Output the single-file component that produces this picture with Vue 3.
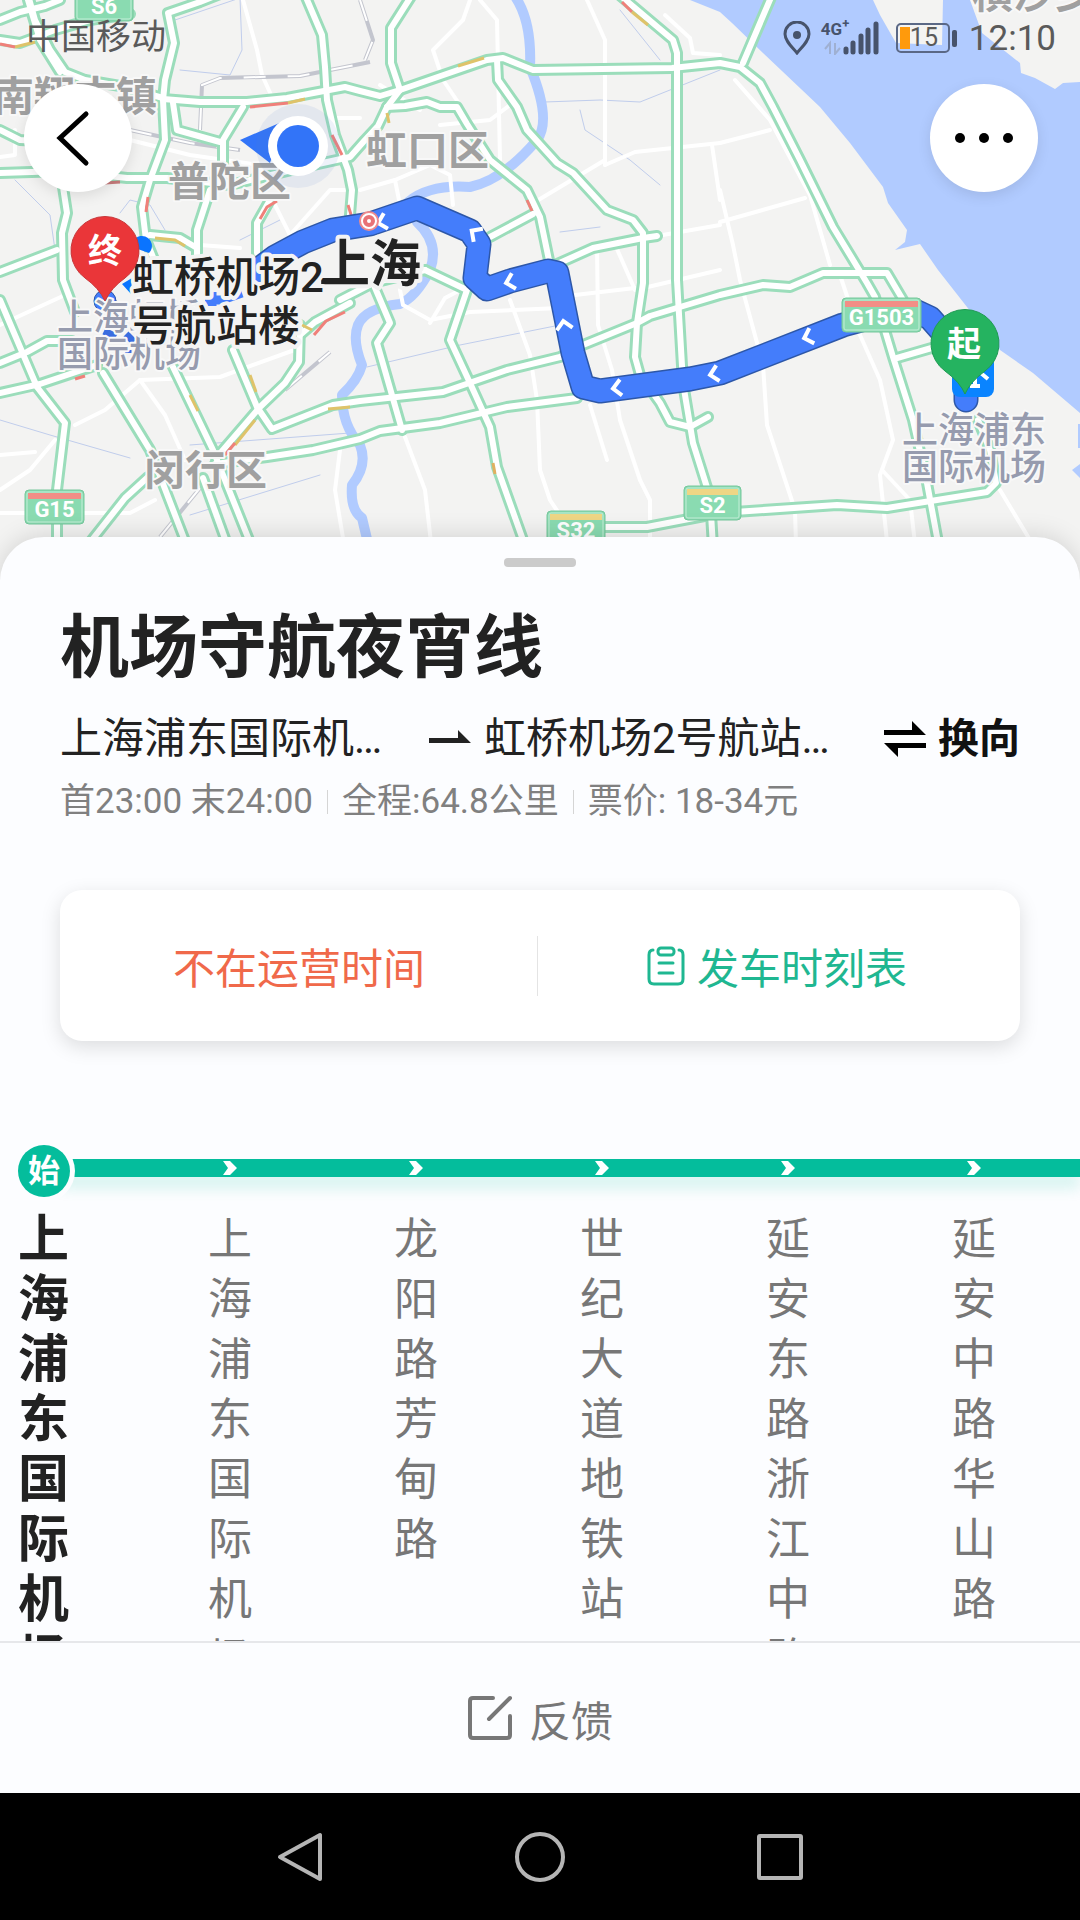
<script setup>
const highways = [
  '28,-5 35,20 50,50 65,72 85,80 120,86 163,98',
  '0,20 20,12 45,6 60,0',
  '0,40 20,43 55,30 90,20 130,14',
  '60,72 40,40 28,0',
  '225,-8 200,2 168,13 174,43 165,80 163,100 165,140 150,180 142,207 146,240 155,262',
  '163,99 200,102 247,102 287,98 345,87 360,91 380,96 400,90 487,60 503,58 533,70 672,68 720,63 740,67 760,83 773,107 800,160 833,227 867,283 875,297 893,357 913,420 927,483 937,537 942,580',
  '305,-5 322,35 325,67 327,100 335,135 348,170 352,190 350,215',
  '0,173 63,171 127,178 167,178 230,185 300,168 350,157 365,140 378,126 387,107 400,90',
  '412,-5 391,28 391,63 400,90',
  '387,107 405,106 427,102 440,107 457,107 467,124 490,160 527,190 540,217 550,265',
  '497,60 498,80 517,107 527,130 557,163 573,173 607,210 633,220 643,233 643,283 637,323 635,357 640,375 660,403 670,422 690,427 708,417',
  '616,-8 673,40 677,53 677,280 683,383 693,443 710,497 715,580',
  '490,237 533,214', '555,265 593,248 643,238 657,236',
  '233,350 257,407 272,429 333,405 360,401 443,392 507,370 560,357 583,345 637,323 650,316 720,295 763,285 790,287 823,273 887,273 903,300',
  '215,464 267,457 313,450 360,439 380,431 440,423 507,407 577,398',
  '580,527 647,527 720,513 837,505 887,508 987,492 996,483 990,450 978,420',
  '425,270 467,290 450,340 470,383 490,427 497,467 523,540 540,580',
  '340,300 373,283 425,270', '373,283 390,323 377,343 402,430',
  '0,300 37,387 65,423 57,490 57,580',
  '0,363 27,352 47,341 72,341', '0,393 40,384 97,365',
  '103,373 150,450 200,580', '173,367 213,450 265,580', '203,478 240,580',
  '300,325 299,362 285,383 260,407 217,457', '148,477 125,498 88,545',
  '63,187 67,213 62,233 63,280 75,312', '0,272 57,250',
  '210,190 197,230 197,257', '243,107 223,140 223,163', '173,103 177,130 220,142',
  '270,200 257,223 257,253', '150,235 180,238 197,248',
  '772,-5 743,63', '897,358 935,347', '0,130 20,140 60,142', '300,335 315,322 350,303',
]
const streets = [
  '243,0 257,50 262,75 272,97', '470,0 463,20 433,50 443,80 460,105', '500,160 497,20 480,0',
  '587,0 605,40 605,165', '665,15 690,38 693,53 720,55', '605,165 635,152 720,143', '605,160 530,205', '712,145 720,200',
  '360,190 395,180 430,165 450,175 453,205', '440,125 490,120 510,105', '395,180 400,205',
  '597,245 598,325 612,370 620,420 640,480 650,500 650,560', '613,240 635,290 720,270',
  '400,290 403,305 430,320 470,312 560,308', '510,300 530,355 537,400 540,470 550,500 560,515',
  '590,405 607,460', '405,437 425,490 433,560', '575,295 635,288', '657,236 720,225',
  '735,80 770,120 810,195 830,265', '720,143 770,130', '720,222 805,198', '720,190 733,245 740,280 763,365 767,425 795,510 797,580',
  '840,275 860,335 880,380 893,440 880,475 890,570', '882,470 910,500 918,570', '1000,490 1030,540 1045,580',
  '0,325 65,295', '75,425 105,410 140,380 220,377 300,348', '140,380 165,415 185,460', '55,440 30,470 0,490', '0,455 35,452',
  '0,513 130,513 155,500', '270,195 290,235 330,190 350,190', '200,245 240,248', '380,85 420,110', '330,118 360,118',
  '340,450 335,490 345,550', '130,140 190,155 260,165', '430,323 445,298 470,285', '0,157 15,155 15,130',
]
const streams = [
  '175,20 240,-2 242,50 230,75 180,70', '545,102 600,100 640,102 720,70', '580,110 585,130 630,160 660,185',
  '560,232 600,227', '367,367 460,345 560,325', '0,420 50,435 130,458', '190,445 350,433', '120,213 130,200 150,205 165,230',
  '15,180 50,215 55,250', '190,515 320,475', '240,240 280,220', '620,10 660,60',
]
const rails = ['200,130 202,85 220,78 300,76 370,62', '130,130 190,143 240,150', '360,0 373,40 365,60', '285,390 330,352', '160,537 200,488']
const slow = [
  { c: '#f0807a', p: '250,107 288,103' }, { c: '#dfc36a', p: '288,103 305,99' }, { c: '#dfc36a', p: '458,66 484,58' },
  { c: '#f0807a', p: '332,135 342,155' }, { c: '#f0807a', p: '260,219 267,207 277,201' }, { c: '#f0807a', p: '148,197 146,212' },
  { c: '#f0807a', p: '348,205 353,221' }, { c: '#dfc36a', p: '155,238 175,240 185,246' }, { c: '#f0807a', p: '527,200 532,211' },
  { c: '#f0807a', p: '622,2 632,12' }, { c: '#dfc36a', p: '632,12 648,25' }, { c: '#f0807a', p: '314,335 326,321 345,312' },
  { c: '#dfc36a', p: '302,325 312,330' }, { c: '#dfc36a', p: '190,395 198,411' }, { c: '#dfc36a', p: '250,375 256,392' },
  { c: '#dfc36a', p: '255,420 235,445' }, { c: '#f0807a', p: '235,443 225,455' }, { c: '#dfc36a', p: '387,113 389,123' },
  { c: '#dfc36a', p: '328,409 350,407' }, { c: '#dfc36a', p: '15,47 35,42' }, { c: '#f0807a', p: '0,44 15,47' },
  { c: '#c67b7b', p: '105,183 120,182' }, { c: '#e0b060', p: '493,463 495,474' }, { c: '#f0807a', p: '75,379 85,376' },
]
const route = '966,400 966,375 945,335 930,318 915,311 880,315 843,325 720,373 690,379 600,391 583,387 573,353 557,273 548,271 510,281 487,289 475,278 479,244 470,231 417,208 370,224 333,230 303,242 275,257 255,272'
const arrows = [
  { x: 382, y: 222, r: -15 }, { x: 475, y: 233, r: 35 }, { x: 510, y: 282, r: -15 }, { x: 564, y: 325, r: 80 },
  { x: 617, y: 388, r: -8 }, { x: 714, y: 374, r: -12 }, { x: 808, y: 337, r: -18 },
]
const shields = [
  { t: 'S6', x: 75, y: -13, w: 58, c: '#8adbb1' }, { t: 'G15', x: 25, y: 490, w: 59, c: '#f28e86' },
  { t: 'G1503', x: 842, y: 298, w: 79, c: '#f28e86' }, { t: 'S32', x: 547, y: 511, w: 58, c: '#eed685' },
  { t: 'S2', x: 684, y: 486, w: 57, c: '#eed685' },
]
const districts = [
  { t: '南翔古镇', x: -7, y: 111 }, { t: '普陀区', x: 168, y: 196 }, { t: '虹口区', x: 366, y: 165 },
  { t: '闵行区', x: 144, y: 485 }, { t: '横沙乡', x: 972, y: 8 },
]
const airports = [
  { t: '上海虹桥', x: 57, y: 330 }, { t: '国际机场', x: 57, y: 367 },
  { t: '上海浦东', x: 902, y: 443 }, { t: '国际机场', x: 902, y: 480 },
]
const stops = ['上海浦东国际机场', '上海浦东国际机场', '龙阳路芳甸路', '世纪大道地铁站', '延安东路浙江中路', '延安中路华山路']
</script>

<template>
  <div class="page">
    <div class="map">
      <svg class="map-art" viewBox="0 0 1080 580" preserveAspectRatio="xMidYMin slice">
        <rect width="1080" height="580" fill="#f3f3f2" />
        <path fill="#b1cbff" d="M690 0 720 12 732 23 763 53 820 107 850 143 883 187 888 203 907 230 905 242 895 250 920 244 938 270 967 307 1000 350 1033 373 1080 413V0Z" />
        <path fill="#f3f3f2" d="M873 0 880 15 896 43 942 45 943 0ZM970 0 982 33 1020 63 1021 73 1035 78 1055 89 1063 83 1080 82V0Z" />
        <path fill="#b1cbff" d="M1078 424h2v24h-2zM1072 470l8-6v14z" />
        <g fill="none" stroke-linejoin="round" stroke-linecap="round">
          <polyline v-for="p in streams" :key="p" :points="p" stroke="#c0cdec" stroke-width="1" />
          <path d="M514 -5 Q532 20 530 67 Q552 120 537 140 Q503 180 470 187 Q430 184 408 202 M417 222 Q440 243 430 270 Q416 297 400 304 Q365 308 358 325 Q352 340 362 365 Q358 380 342 395 Q342 425 360 445 Q368 465 352 485 Q350 510 362 518 L372 560" stroke="#b1cbff" stroke-width="10" />
          <polyline v-for="p in streets" :key="p" :points="p" stroke="#fff" stroke-width="4" />
          <polyline v-for="p in rails" :key="p" :points="p" stroke="#c3c5ce" stroke-width="4" stroke-linecap="butt" />
          <polyline v-for="p in rails" :key="p + 'd'" :points="p" stroke="#fff" stroke-width="2" stroke-dasharray="22 22" stroke-linecap="butt" />
          <polyline v-for="p in highways" :key="p" :points="p" stroke="#9bddbb" stroke-width="12" />
          <polyline v-for="p in highways" :key="p + 'i'" :points="p" stroke="#fff" stroke-width="6" />
          <polyline v-for="s in slow" :key="s.p" :points="s.p" :stroke="s.c" stroke-width="3" stroke-linecap="butt" />
        </g>
        <g font-weight="700" font-size="41" fill="#a0a0a0" class="halo">
          <text v-for="d in districts" :key="d.t" :x="d.x" :y="d.y">{{ d.t }}</text>
        </g>
        <g fill="none" stroke-linejoin="round" stroke-linecap="round">
          <polyline :points="route" stroke="#2d57a8" stroke-width="25" />
          <polyline :points="route" stroke="#447dfb" stroke-width="22" />
          <path d="M212 306V292M205 300H222L242 293" stroke="#447dfb" stroke-width="9" stroke-linecap="butt" />
          <path d="M104 331l12 6M126 334l8 8M128 350v3" stroke="#3a6de0" stroke-width="7" stroke-linecap="butt" />
          <path v-for="a in arrows" :key="a.x" :transform="`translate(${a.x} ${a.y}) rotate(${a.r})`" d="M4 -8-4 0 4 8" stroke="#fff" stroke-width="4" stroke-linecap="butt" stroke-linejoin="miter" />
          <circle cx="105" cy="301" r="11" fill="#447dfb" stroke="#2d57a8" stroke-width="1" />
        </g>
        <g font-weight="500" font-size="36" fill="#969bae" class="halo">
          <text v-for="a in airports" :key="a.y" :x="a.x" :y="a.y">{{ a.t }}</text>
        </g>
        <g>
          <circle cx="369" cy="221" r="9" fill="#fff" stroke="#ee8a8c" stroke-width="2" />
          <circle cx="369" cy="221" r="4" fill="#fff" stroke="#e87276" stroke-width="4" />
        </g>
        <g v-for="s in shields" :key="s.t" class="shield">
          <rect :x="s.x" :y="s.y" :width="s.w" height="34" rx="4" fill="#8adbb1" stroke="#76c79c" stroke-width="1" />
          <rect :x="s.x + 2" :y="s.y + 2" :width="s.w - 4" height="30" rx="2" fill="none" stroke="#c4eed8" stroke-width="1" />
          <rect :x="s.x + 3" :y="s.y + 3" :width="s.w - 6" height="6" :fill="s.c" />
          <text :x="s.x + s.w / 2" :y="s.y + 27" text-anchor="middle">{{ s.t }}</text>
        </g>
        <path d="M240 140 284 121 270 163Z" fill="#3274f8" />
        <circle cx="298" cy="146" r="42" fill="#5b7ed0" opacity="0.1" />
        <circle cx="298" cy="146" r="30" fill="#fff" />
        <circle cx="298" cy="146" r="21" fill="#3274f8" />
        <path d="M132 247a10 10 0 1 1 17 6ZM122 284l10-6-1 16Z" fill="#0a74ff" />
        <g font-weight="700" fill="#222" class="halo place">
          <text x="319" y="282" font-size="51">上海</text>
          <g font-size="42" font-weight="500"><text x="132" y="292">虹桥机场2</text><text x="132" y="341">号航站楼</text></g>
        </g>
        <path d="M105 301Q99 288 85 278A34 34 0 1 1 125 278Q111 288 105 301Z" fill="#ea3639" stroke="#c8383a" stroke-width="1" />
        <rect x="952" y="355" width="42" height="42" rx="8" fill="#0a84ff" />
        <path d="M970 386h10M975 386V374M964 379l12-10 12 10" stroke="#fff" stroke-width="4" fill="none" />
        <path d="M965 394Q960 382 945 371A34 34 0 1 1 985 371Q970 382 965 394Z" fill="#25b360" stroke="#1f9a53" stroke-width="1" />
        <g font-weight="700" font-size="34" fill="#fff" text-anchor="middle">
          <text x="105" y="263">终</text><text x="964" y="356">起</text>
        </g>
      </svg>

      <header class="status">
        <span class="carrier">中国移动</span>
        <span class="tray">
          <svg width="28" height="34" viewBox="0 0 28 34"><path d="M14 32C9 26 2 20 2 13A12 12 0 0 1 26 13C26 20 19 26 14 32Z" fill="none" stroke="#47536b" stroke-width="3" /><circle cx="14" cy="14" r="4" fill="#47536b" /></svg>
          <span class="signal">
            <span class="net">4G<sup>+</sup></span>
            <svg width="60" height="34" viewBox="0 0 60 34"><path d="M27 31v-3M34 31V22M42 31V15M49 31V9M57 31V3" stroke="#47536b" stroke-width="5" stroke-linecap="round" /><path d="M11 33V22L6 28M16 22v11l5-6" fill="none" stroke="#9fb0d2" stroke-width="2" /></svg>
          </span>
          <span class="battery"><i></i>15</span>
          <span class="clock">12:10</span>
        </span>
      </header>

      <div class="tools">
        <button class="round" aria-label="返回"><svg width="108" height="108" viewBox="0 0 108 108"><path d="M62 30 36 54 62 79" fill="none" stroke="#000" stroke-width="5" stroke-linecap="round" /></svg></button>
        <button class="round" aria-label="更多"><svg width="108" height="108" viewBox="0 0 108 108"><circle cx="30" cy="54" r="5" /><circle cx="54" cy="54" r="5" /><circle cx="78" cy="54" r="5" /></svg></button>
      </div>
    </div>

    <main class="sheet">
      <div class="grip"></div>
      <section class="info">
        <h1>机场守航夜宵线</h1>
        <div class="direction">
          <span class="from">上海浦东国际机…</span>
          <svg class="to-arrow" width="42" height="18" viewBox="0 0 42 18"><path d="M0 8H29V0L42 13H0Z" fill="#222" /></svg>
          <span class="to">虹桥机场2号航站…</span>
          <button class="swap">
            <svg width="42" height="38" viewBox="0 0 42 38"><path d="M0 10H28V1L42 15H0ZM42 23H0L14 37V28H42Z" fill="#000" /></svg>
            换向
          </button>
        </div>
        <div class="facts">
          <span>首23:00 末24:00</span><span>全程:64.8公里</span><span>票价: 18-34元</span>
        </div>
      </section>

      <div class="card">
        <div class="half off">不在运营时间</div>
        <button class="half timetable">
          <svg width="38" height="40" viewBox="0 0 38 40" fill="none" stroke="#1fb791" stroke-width="3" stroke-linecap="round"><path d="M6 4Q2 4 2 9V33Q2 38 7 38H31Q36 38 36 33V9Q36 4 32 4" /><rect x="11" y="2" width="16" height="7" rx="3" /><path d="M12 17H26M12 27H26" /></svg>
          发车时刻表
        </button>
      </div>

      <section class="line">
        <div class="track"></div>
        <ol class="stops">
          <li v-for="(s, i) in stops" :key="i" :class="{ first: i === 0 }">
            <div class="mark">
              <span v-if="i === 0" class="origin">始</span>
              <svg v-else width="14" height="16" viewBox="0 0 14 16"><path d="M0 1H7L14 8 7 15H0L5 8Z" fill="#fff" /></svg>
            </div>
            <div class="name">{{ s }}</div>
          </li>
        </ol>
      </section>
    </main>

    <button class="feedback">
      <svg width="46" height="46" viewBox="0 0 46 46" fill="none" stroke="#777" stroke-width="4" stroke-linecap="round" stroke-linejoin="round"><path d="M26 3H6Q3 3 3 6V40Q3 43 6 43H40Q43 43 43 40V21M43 3 22 24" /></svg>
      反馈
    </button>

    <nav class="keys">
      <button aria-label="后退"><svg width="52" height="52" viewBox="0 0 52 52"><path d="M46 4V48L6 26Z" /></svg></button>
      <button aria-label="主屏幕"><svg width="52" height="52" viewBox="0 0 52 52"><circle cx="26" cy="26" r="23" /></svg></button>
      <button aria-label="最近任务"><svg width="52" height="52" viewBox="0 0 52 52"><rect x="5" y="5" width="42" height="42" rx="1" /></svg></button>
    </nav>
  </div>
</template>

<style>
body { margin: 0; }
</style>

<style scoped>
.page { display: flex; flex-direction: column; height: 100vh; overflow: hidden; background: #fcfdff; font-family: Roboto, "Noto Sans CJK SC", sans-serif; color: #222; }
button { margin: 0; padding: 0; border: 0; background: none; font: inherit; color: inherit; cursor: pointer; }
svg { display: block; flex: none; }
.map { position: relative; flex: none; height: 580px; overflow: hidden; }
.map-art { position: absolute; inset: 0; width: 100%; height: 100%; }
.halo text { paint-order: stroke; stroke: #f8f8f8; stroke-width: 4px; stroke-linejoin: round; }
.place text { stroke: #f3f3f3; stroke-width: 8px; }
.shield text { font-size: 22px; font-weight: 700; fill: #fff; }
.status { position: relative; display: flex; justify-content: space-between; align-items: center; height: 76px; padding: 0 24px 0 26px; color: #5a5a5a; font-size: 35px; }
.carrier { line-height: 52px; }
.tray { display: flex; align-items: center; }
.signal { position: relative; margin: 0 17px 0 8px; }
.net { position: absolute; left: 2px; top: 0; font-size: 17px; line-height: 17px; font-weight: 700; color: #47536b; }
.net sup { font-size: 13px; line-height: 0; }
.battery { position: relative; display: flex; align-items: center; box-sizing: border-box; width: 54px; height: 30px; padding-left: 2px; border: 2px solid #5a6886; border-radius: 5px; font-size: 25px; line-height: 26px; margin-right: 19px; }
.battery i { width: 10px; height: 22px; background: #ff9a0c; }
.battery::after { content: ""; position: absolute; right: -9px; top: 5px; width: 5px; height: 17px; border-radius: 2px; background: #47536b; }
.tools { position: relative; display: flex; justify-content: space-between; padding: 8px 42px 0 24px; }
.round { width: 108px; height: 108px; border-radius: 50%; background: #fff; box-shadow: 0 4px 14px rgba(0, 0, 0, 0.1); }
.sheet { position: relative; flex: 1; min-height: 0; display: flex; flex-direction: column; margin-top: -43px; background: #fcfdff; border-radius: 44px 44px 0 0; box-shadow: 0 -2px 24px rgba(0, 0, 0, 0.13); overflow: hidden; }
.grip { flex: none; align-self: center; width: 72px; height: 9px; margin-top: 21px; border-radius: 4px; background: #cbcbcb; }
.info { padding: 32px 60px 0; }
h1 { margin: 0; font-size: 69px; line-height: 100px; font-weight: 700; }
.direction { display: flex; align-items: center; height: 80px; font-size: 42px; line-height: 60px; white-space: nowrap; }
.from { width: 369px; }
.to-arrow { margin-right: 13px; }
.swap { display: flex; align-items: center; gap: 12px; margin-left: auto; font-size: 41px; font-weight: 700; color: #111; }
.facts { display: flex; align-items: center; height: 46px; font-size: 35px; line-height: 46px; color: #808080; white-space: nowrap; }
.facts span + span { display: flex; align-items: center; }
.facts span + span::before { content: ""; width: 1px; height: 24px; margin: 0 14px; background: #d5d5d5; }
.card { flex: none; display: flex; margin: 65px 60px 0; height: 151px; border-radius: 22px; background: #fff; box-shadow: 0 6px 20px rgba(0, 0, 0, 0.13); }
.half { flex: 1; display: flex; align-items: center; justify-content: center; gap: 12px; font-size: 42px; }
.off { color: #f0694a; background: linear-gradient(#e4e4e4, #e4e4e4) right center / 1px 60px no-repeat; }
.timetable { padding-right: 4px; color: #1fb791; }
.line { position: relative; flex: 1; min-height: 0; margin-top: 99px; overflow: hidden; }
.track { position: absolute; left: 60px; right: 0; top: 19px; height: 18px; background: #04bd9c; box-shadow: 0 12px 14px rgba(4, 189, 156, 0.14); }
.stops { position: relative; display: flex; gap: 134px; margin: 0; padding: 0 0 0 18px; list-style: none; }
.stops li { flex: none; width: 52px; }
.mark { display: flex; align-items: center; justify-content: center; height: 56px; }
.origin { flex: none; width: 52px; height: 52px; border-radius: 50%; background: #04bd9c; color: #fff; font-size: 32px; line-height: 52px; font-weight: 700; text-align: center; box-shadow: 0 0 0 5px #fcfdff; margin-top: 6px; }
.name { width: 44px; margin: 14px auto 0; font-size: 44px; line-height: 60px; word-break: break-all; color: #777; }
.first .name { width: 52px; font-size: 51px; font-weight: 700; color: #222; }
.feedback { flex: none; display: flex; align-items: center; justify-content: center; gap: 16px; height: 152px; box-sizing: border-box; border-top: 2px solid #e6e7ea; font-size: 42px; color: #777; background: #fcfdff; position: relative; }
.keys { flex: none; display: flex; align-items: center; justify-content: center; gap: 188px; height: 127px; background: #000; }
.keys svg { fill: none; stroke: #b5b5b5; stroke-width: 4px; stroke-linejoin: round; }
</style>
